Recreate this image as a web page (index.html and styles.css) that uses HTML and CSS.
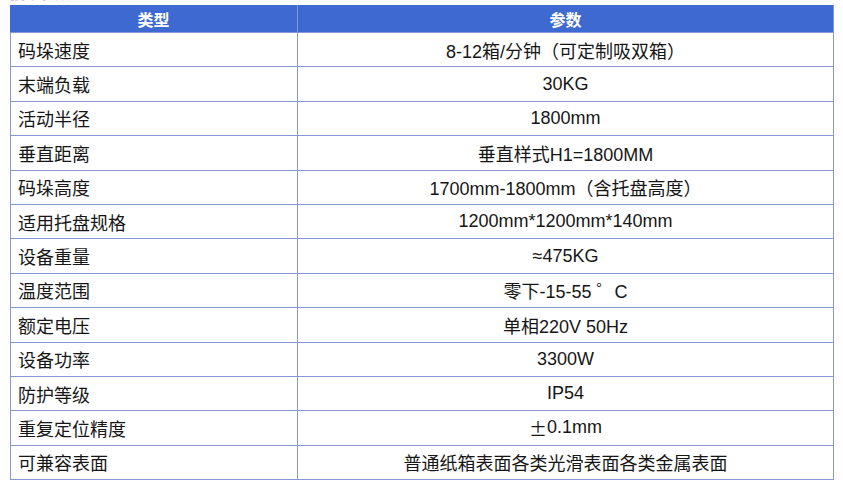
FILE: index.html
```html
<!DOCTYPE html>
<html lang="zh-CN">
<head>
<meta charset="utf-8">
<title>参数表</title>
<link rel="stylesheet" href="styles.css">
</head>
<body>
<div class="page">
  <div class="caption"><span>技术参数</span></div>
  <div class="spec">
    <div class="hd">类型</div><div class="hd">参数</div>
    <div class="k">码垛速度</div><div class="v">8-12箱/分钟（可定制吸双箱）</div>
    <div class="k">末端负载</div><div class="v">30KG</div>
    <div class="k">活动半径</div><div class="v">1800mm</div>
    <div class="k">垂直距离</div><div class="v">垂直样式H1=1800MM</div>
    <div class="k">码垛高度</div><div class="v">1700mm-1800mm（含托盘高度）</div>
    <div class="k">适用托盘规格</div><div class="v">1200mm*1200mm*140mm</div>
    <div class="k">设备重量</div><div class="v">≈475KG</div>
    <div class="k">温度范围</div><div class="v">零下-15-55 ゜C</div>
    <div class="k">额定电压</div><div class="v">单相220V 50Hz</div>
    <div class="k">设备功率</div><div class="v">3300W</div>
    <div class="k">防护等级</div><div class="v">IP54</div>
    <div class="k">重复定位精度</div><div class="v"><span class="cjk">±</span>0.1mm</div>
    <div class="k">可兼容表面</div><div class="v">普通纸箱表面各类光滑表面各类金属表面</div>
  </div>
</div>
</body>
</html>
```
FILE: styles.css
```css
html, body {
  margin: 0;
  padding: 0;
  background: #ffffff;
}
body {
  font-family: "Liberation Sans", "Noto Sans CJK SC", sans-serif;
  color: #161616;
}
.page {
  padding: 0 9px 0 10px;
}
.caption {
  height: 5px;
  overflow: hidden;
}
.caption span {
  display: block;
  margin-top: -15px;
  font-size: 15px;
  line-height: 18px;
  color: #b7c3ea;
}
.spec {
  width: 822px;
  display: grid;
  grid-template-columns: 286px 1fr;
  grid-template-rows: 27px;
  grid-auto-rows: 33.4px;
  gap: 1px;
  background: #8797d4;
  border: 1px solid #8797d4;
  border-top: none;
}
.hd {
  background: #3e69d0;
  color: #ffffff;
  font-weight: bold;
  font-size: 16px;
  display: flex;
  align-items: center;
  justify-content: center;
}
.spec .hd:first-child {
  margin-left: -1px;
}
.k, .v {
  background: #ffffff;
  font-size: 18px;
  display: flex;
  align-items: center;
}
.k {
  padding-left: 7px;
}
.v {
  justify-content: center;
}
.cjk {
  font-family: "Noto Sans CJK SC", sans-serif;
}
```
